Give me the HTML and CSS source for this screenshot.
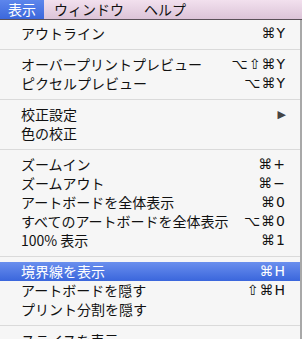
FILE: index.html
```html
<!DOCTYPE html>
<html lang="ja">
<head>
    <meta charset="UTF-8">
    <meta name="viewport" content="width=device-width, initial-scale=1.0">
    <title>表示メニュー</title>
    <link rel="stylesheet" href="styles.css">
</head>
<body>
    <div class="menubar">
        <span class="menu active">表示</span>
        <span class="menu">ウィンドウ</span>
        <span class="menu">ヘルプ</span>
    </div>

    <ul class="dropdown">
        <li class="item"><span class="label">アウトライン</span><span class="key">⌘Y</span></li>
        <li class="sep"></li>
        <li class="item"><span class="label">オーバープリントプレビュー</span><span class="key">⌥⇧⌘Y</span></li>
        <li class="item"><span class="label">ピクセルプレビュー</span><span class="key">⌥⌘Y</span></li>
        <li class="sep"></li>
        <li class="item"><span class="label">校正設定</span><span class="arrow">▶</span></li>
        <li class="item"><span class="label">色の校正</span></li>
        <li class="sep"></li>
        <li class="item"><span class="label">ズームイン</span><span class="key">⌘+</span></li>
        <li class="item"><span class="label">ズームアウト</span><span class="key">⌘−</span></li>
        <li class="item"><span class="label">アートボードを全体表示</span><span class="key">⌘0</span></li>
        <li class="item"><span class="label">すべてのアートボードを全体表示</span><span class="key">⌥⌘0</span></li>
        <li class="item"><span class="label">100% 表示</span><span class="key">⌘1</span></li>
        <li class="sep"></li>
        <li class="item selected"><span class="label">境界線を表示</span><span class="key">⌘H</span></li>
        <li class="item"><span class="label">アートボードを隠す</span><span class="key">⇧⌘H</span></li>
        <li class="item"><span class="label">プリント分割を隠す</span></li>
        <li class="sep"></li>
        <li class="item"><span class="label">スライスを表示</span></li>
    </ul>
</body>
</html>
```

FILE: styles.css
```css
body {
    margin: 0;
    background-color: #a8a8a8;
    font-family: "Noto Sans CJK JP", "DejaVu Sans", sans-serif;
    font-size: 14px;
    color: #111;
    overflow: hidden;
}

.menubar {
    display: flex;
    height: 19px;
    line-height: 19px;
    background: linear-gradient(#f2e0ee, #dcc4d8);
    border-bottom: 1px solid #5a5058;
}

.menu {
    padding: 0 10px;
}

.menu.active {
    padding: 0 8px;
    background: linear-gradient(#5d86ec, #3c68dc);
    color: white;
}

.dropdown {
    width: 300px;
    margin: 0;
    padding: 4px 0 0;
    list-style: none;
    background-color: #f6f6f6;
}

.item {
    display: flex;
    justify-content: space-between;
    align-items: center;
    height: 19px;
    line-height: 19px;
    padding: 0 14px 0 21px;
}

.item.selected {
    background: linear-gradient(#6a8fee, #3a66dc);
    color: white;
}

.key {
    font-family: "DejaVu Sans", sans-serif;
    font-size: 14px;
    letter-spacing: 1px;
}

.arrow {
    font-family: "DejaVu Sans", sans-serif;
    font-size: 11px;
    color: #444;
}

.sep {
    height: 1px;
    margin: 6px 0 5px;
    background-color: #dadada;
}
```
